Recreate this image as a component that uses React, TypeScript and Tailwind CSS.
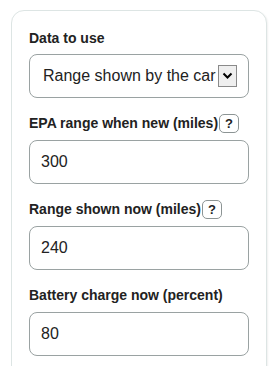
import React from "react";

const fields = [
  { label: "EPA range when new (miles)", value: "300", help: true },
  { label: "Range shown now (miles)", value: "240", help: true },
  { label: "Battery charge now (percent)", value: "80", help: false },
];

function HelpButton() {
  return (
    <button
      type="button"
      className="ml-[1px] flex h-[19px] w-[20px] items-center justify-center rounded-[5px] border border-[#8c9494] bg-white text-[13px] font-bold leading-none text-[#222]"
    >
      ?
    </button>
  );
}

export default function App() {
  return (
    <div
      className="h-screen overflow-hidden bg-white pl-[11px] pr-[11px] pt-[10px]"
      style={{ fontFamily: '"Liberation Sans", Arial, sans-serif' }}
    >
      <div className="flex flex-col rounded-[13px] border border-[#dde5e4] bg-white px-[17px] pb-[30px] pt-[17px] shadow-[1px_1px_2px_rgba(0,0,0,0.06)]">
        <label className="flex h-[20px] items-center text-[14px] font-bold text-[#222]">
          Data to use
        </label>
        <div className="relative mt-[6px] h-[44px] w-full">
          <select className="h-full w-full appearance-none overflow-hidden rounded-[8px] border border-[#9aa2a2] bg-white pl-[13px] pr-[14px] text-[16px] text-[#222] outline-none">
            <option>Range shown by the car</option>
            <option>EPA range</option>
          </select>
          <div className="pointer-events-none absolute right-[12px] top-[11px] flex h-[22px] w-[19px] items-center justify-center border border-[#8a8a8a] bg-[#efefef]">
            <svg width="11" height="8" viewBox="0 0 11 8">
              <path d="M1.5 1.5 L5.5 5.5 L9.5 1.5" fill="none" stroke="#000" strokeWidth="2" />
            </svg>
          </div>
        </div>

        {fields.map((f) => (
          <div key={f.label} className="mt-[15px] flex flex-col">
            <div className="flex h-[21px] items-center text-[14px] font-bold text-[#222]">
              <span>{f.label}</span>
              {f.help && <HelpButton />}
            </div>
            <input
              className="mt-[6px] h-[44px] w-full rounded-[8px] border border-[#9aa2a2] bg-white px-[11px] text-[16px] text-[#222] outline-none"
              defaultValue={f.value}
            />
          </div>
        ))}
      </div>
    </div>
  );
}
